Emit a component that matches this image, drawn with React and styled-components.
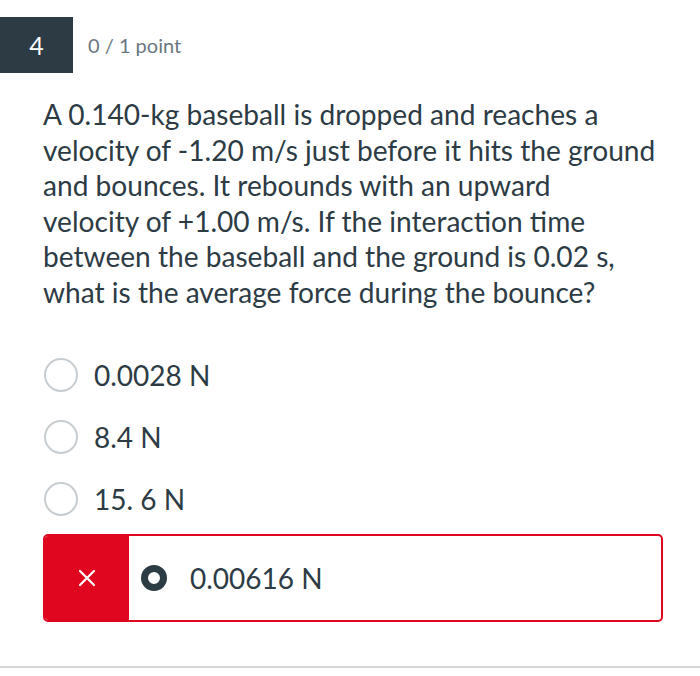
import React from "react";
import styled, { createGlobalStyle } from "styled-components";

const GlobalStyle = createGlobalStyle`
    html, body {
        margin: 0;
        padding: 0;
        background: #ffffff;
    }
    body {
        font-family: Lato, "Noto Sans", sans-serif;
        color: #2d3b45;
    }
`;

const Page = styled.div`
    width: 700px;
    height: 676px;
    box-sizing: border-box;
    padding-top: 17px;
    display: flex;
    flex-direction: column;
`;

const Header = styled.div`
    display: flex;
    align-items: center;
    gap: 15px;
`;

const NumberBadge = styled.div`
    width: 73px;
    height: 56px;
    background-color: #2d3b45;
    color: #ffffff;
    font-size: 25px;
    display: flex;
    align-items: center;
    justify-content: center;
`;

const Points = styled.div`
    font-size: 20px;
    color: #6b7780;
`;

const Body = styled.div`
    padding: 0 30px 0 43px;
`;

const Question = styled.p`
    margin: 24px 0 33px;
    font-size: 28.1px;
    line-height: 35.6px;
    white-space: nowrap;
    color: #2d3b45;
`;

const Answers = styled.div`
    display: flex;
    flex-direction: column;
`;

const Option = styled.div`
    display: flex;
    align-items: center;
    height: 62px;
    gap: 16px;
`;

const Radio = styled.span`
    width: 34px;
    height: 34px;
    box-sizing: border-box;
    border-radius: 50%;
    border: 2px solid #c7cdd1;
    flex-shrink: 0;
    margin-left: 1px;
`;

const OptionText = styled.span`
    font-size: 28px;
    color: #2d3b45;
`;

const WrongBox = styled.div`
    margin-top: 4px;
    width: 620px;
    height: 88px;
    box-sizing: border-box;
    border: 2px solid #e0061f;
    border-radius: 5px;
    display: flex;
    overflow: hidden;
`;

const WrongMark = styled.div`
    width: 84px;
    background-color: #e0061f;
    color: #ffffff;
    display: flex;
    align-items: center;
    justify-content: center;
    flex-shrink: 0;
`;

const WrongAnswer = styled.div`
    display: flex;
    align-items: center;
    gap: 23px;
    padding-left: 12px;
`;

const SelectedRadio = styled.span`
    width: 26px;
    height: 26px;
    box-sizing: border-box;
    border-radius: 50%;
    border: 7px solid #2d3b45;
    flex-shrink: 0;
`;

const Divider = styled.div`
    margin-top: auto;
    margin-bottom: 8px;
    height: 2px;
    background-color: #d4d6d8;
`;

function App() {
    return (
        <Page>
            <GlobalStyle />
            <Header>
                <NumberBadge>4</NumberBadge>
                <Points>0 / 1 point</Points>
            </Header>
            <Body>
                <Question>
                    A 0.140-kg baseball is dropped and reaches a<br />
                    velocity of -1.20 m/s just before it hits the ground<br />
                    and bounces. It rebounds with an upward<br />
                    velocity of +1.00 m/s. If the interaction time<br />
                    between the baseball and the ground is 0.02 s,<br />
                    what is the average force during the bounce?
                </Question>
                <Answers>
                    <Option><Radio /><OptionText>0.0028 N</OptionText></Option>
                    <Option><Radio /><OptionText>8.4 N</OptionText></Option>
                    <Option><Radio /><OptionText>15. 6 N</OptionText></Option>
                    <WrongBox>
                        <WrongMark>
                            <svg width="18" height="18" viewBox="0 0 18 18">
                                <path d="M2 2 L16 16 M16 2 L2 16" stroke="#ffffff" strokeWidth="2.2" strokeLinecap="round" />
                            </svg>
                        </WrongMark>
                        <WrongAnswer>
                            <SelectedRadio />
                            <OptionText>0.00616 N</OptionText>
                        </WrongAnswer>
                    </WrongBox>
                </Answers>
            </Body>
            <Divider />
        </Page>
    );
}

export default App;
